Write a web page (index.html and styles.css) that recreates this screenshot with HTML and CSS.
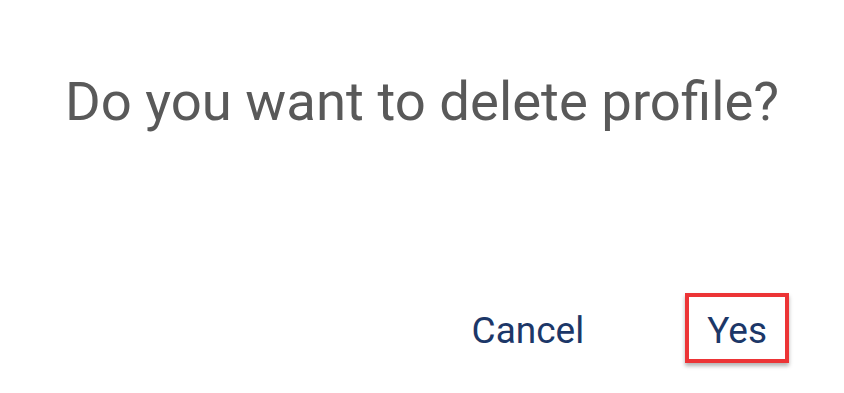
FILE: index.html
```html
<!DOCTYPE html>
<html lang="en">
<head>
<meta charset="utf-8">
<title>Delete profile</title>
<link rel="stylesheet" href="styles.css">
</head>
<body>
<div class="dialog">
  <h1 class="dialog-title">Do you want to delete profile?</h1>
  <div class="dialog-actions">
    <button class="action">Cancel</button>
    <button class="action action-highlight">Yes</button>
  </div>
</div>
</body>
</html>
```

FILE: styles.css
```css
html, body {
  margin: 0;
  padding: 0;
  background: #ffffff;
}

body {
  width: 844px;
  height: 393px;
  overflow: hidden;
  font-family: Roboto, "Liberation Sans", sans-serif;
}

.dialog {
  display: flex;
  flex-direction: column;
  padding: 71px 55px 0 55px;
}

.dialog-title {
  margin: 0;
  font-size: 54.5px;
  font-weight: 400;
  line-height: 61px;
  color: #595959;
  text-align: center;
  white-space: nowrap;
}

.dialog-actions {
  display: flex;
  justify-content: flex-end;
  align-items: center;
  gap: 79px;
  margin-top: 161px;
}

.action {
  font-family: Roboto, "Liberation Sans", sans-serif;
  font-size: 37px;
  line-height: 37px;
  color: #1c3768;
  background: transparent;
  border: 4px solid transparent;
  padding: 15px 18px 10px 18px;
  margin: 0;
  cursor: pointer;
}

.action-highlight {
  border-color: #ec3436;
  box-shadow: 0 3px 4px rgba(0, 0, 0, 0.3);
}
```
